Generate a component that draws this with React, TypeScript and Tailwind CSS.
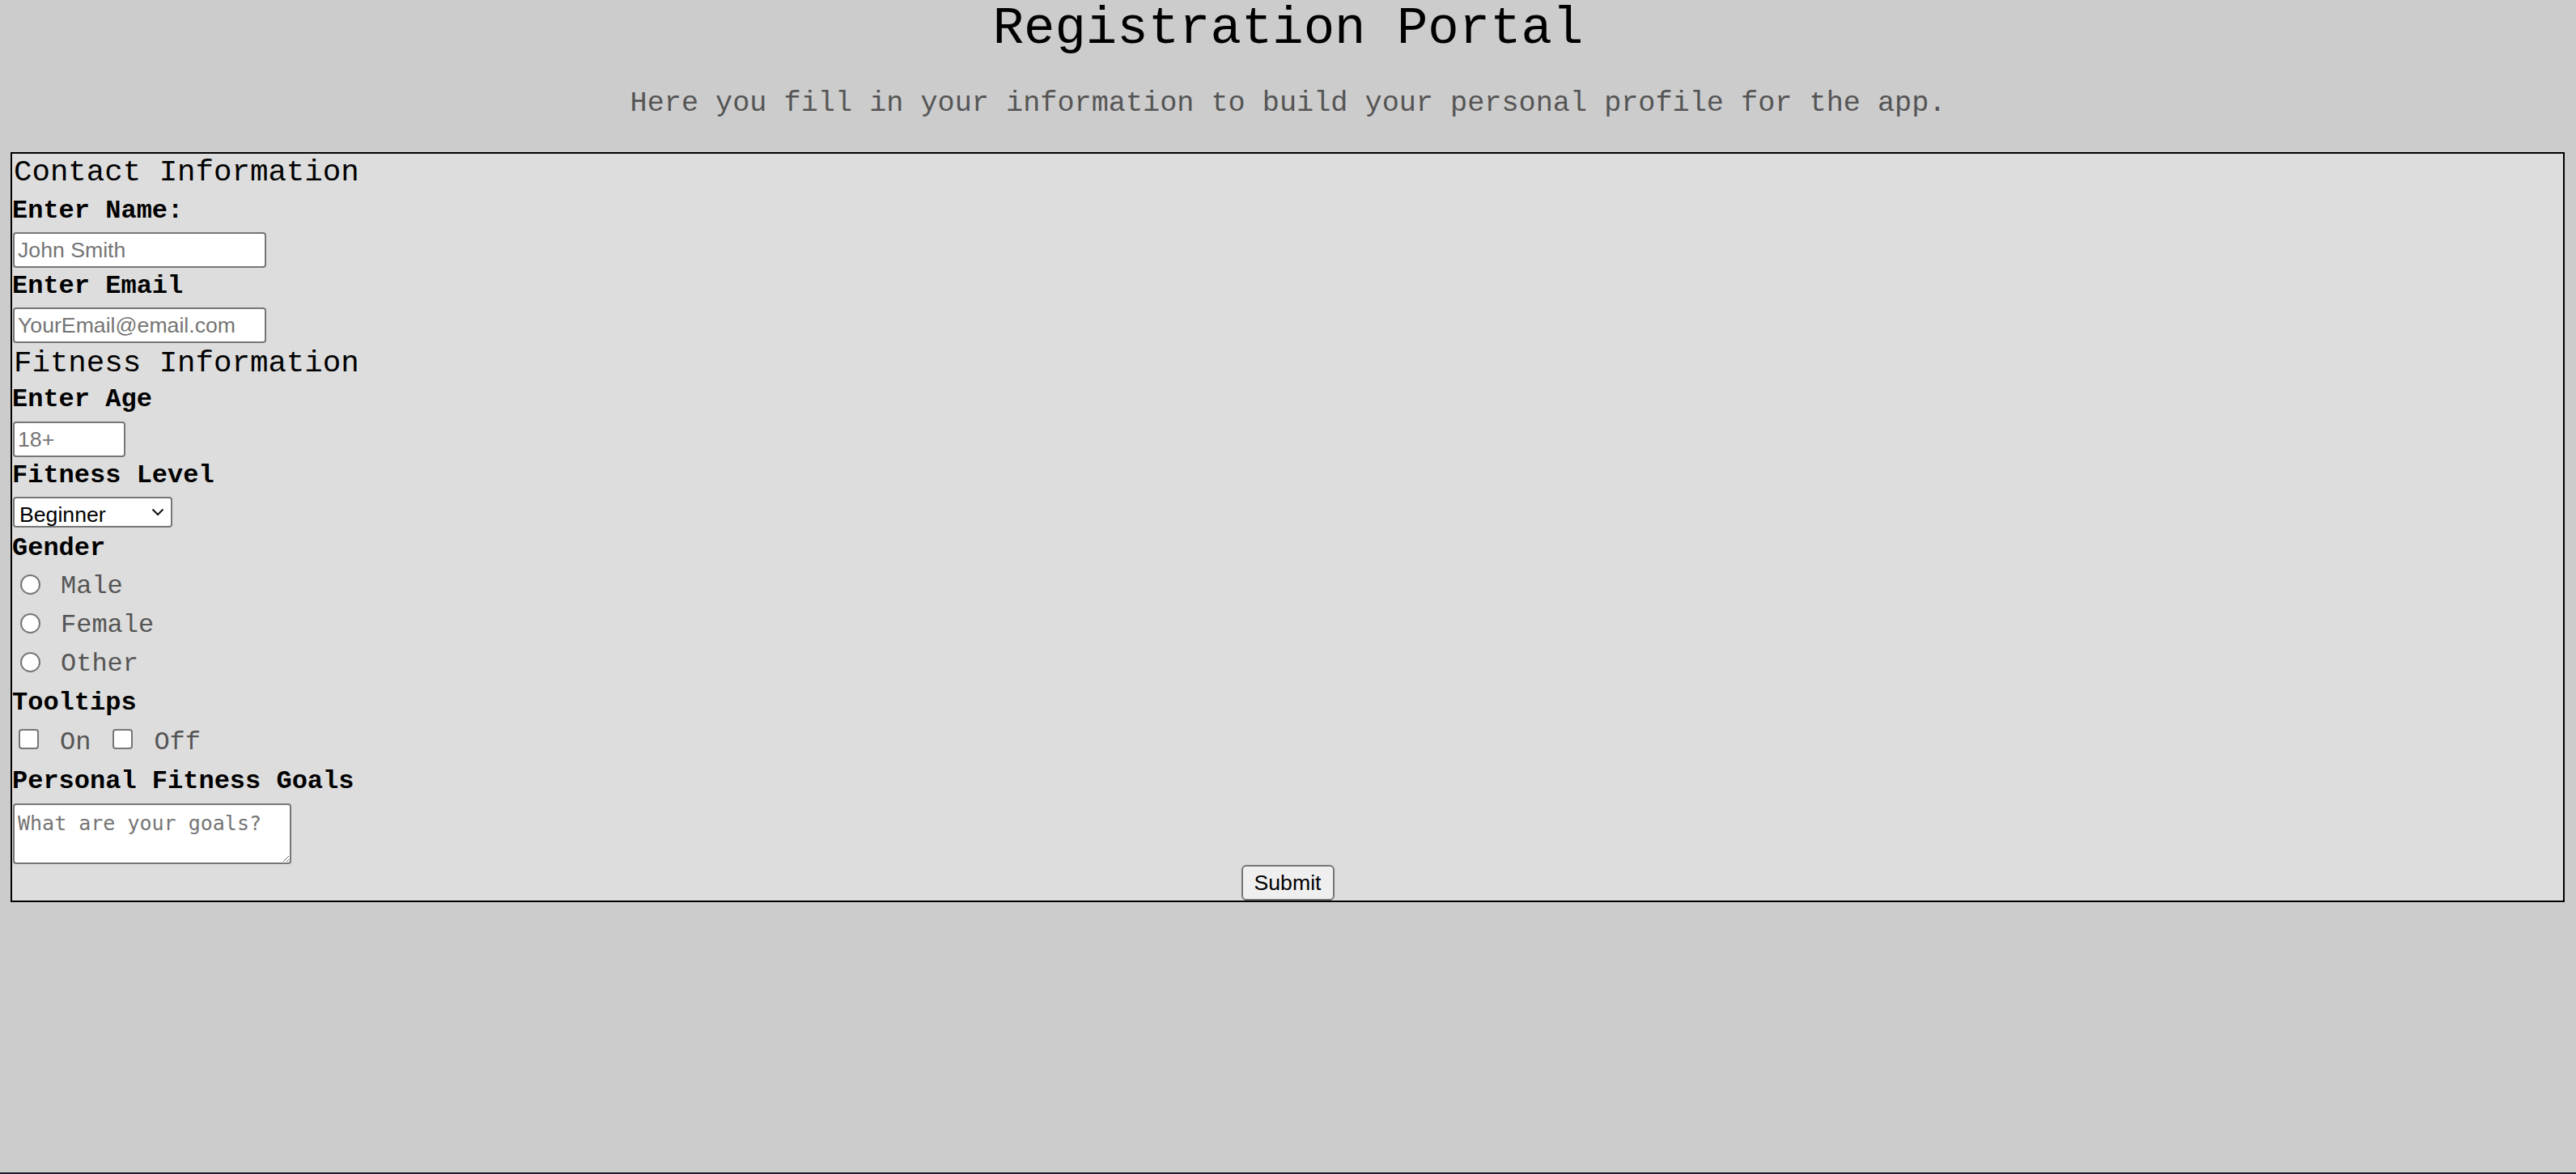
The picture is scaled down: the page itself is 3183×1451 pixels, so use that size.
export default function App() {
  const label = "text-[32px] font-bold leading-[36px] text-black";
  const input =
    "ml-[1px] h-[44px] rounded-[4px] border-2 border-[#767676] bg-white px-[4px] font-['Liberation_Sans',Arial,sans-serif] text-[26.67px] text-black outline-none placeholder:text-[#757575]";
  const radio = "ml-[10px] mt-[11px] h-[25px] w-[25px] shrink-0 appearance-none rounded-full border-2 border-[#767676] bg-white";
  const box = "h-[25px] w-[25px] shrink-0 appearance-none rounded-[4px] border-2 border-[#767676] bg-white";
  const soft = "text-[32px] leading-[36px] text-[#555555]";

  return (
    <div className="flex min-h-[1451px] flex-col bg-[#cccccc] font-['Liberation_Mono','Courier_New',monospace] text-black">
      <div className="flex-1">
        <h1 className="m-0 text-center text-[64px] font-normal leading-[72px]">Registration Portal</h1>
        <p className="mt-[36px] text-center text-[35.2px] leading-[40px] text-[#555555]">
          Here you fill in your information to build your personal profile for the app.
        </p>
        <form
          className="ml-[13px] mr-[14px] mt-[40px] flex flex-col items-start border-2 border-black bg-[#dddddd]"
          onSubmit={(e) => e.preventDefault()}
        >
          <h3 className="pl-[2px] pt-[2px] text-[37.44px] font-normal leading-[42px]">Contact Information</h3>
          <label className={`mt-[9px] ${label}`}>Enter Name:</label>
          <input type="text" placeholder="John Smith" className={`mt-[8px] w-[313px] ${input}`} />
          <label className={`mt-[5px] ${label}`}>Enter Email</label>
          <input type="text" placeholder="YourEmail@email.com" className={`mt-[8px] w-[313px] ${input}`} />

          <h3 className="mt-[2px] pl-[2px] pt-[2px] text-[37.44px] font-normal leading-[42px]">Fitness Information</h3>
          <label className={`mt-[6px] ${label}`}>Enter Age</label>
          <input type="text" placeholder="18+" className={`mt-[9px] w-[139px] ${input}`} />
          <label className={`mt-[5px] ${label}`}>Fitness Level</label>
          <div className="relative ml-[1px] mt-[8px]">
            <select
              defaultValue="Beginner"
              className="h-[38px] w-[197px] appearance-none rounded-[4px] border-2 border-[#767676] bg-white pl-[6px] font-['Liberation_Sans',Arial,sans-serif] text-[26.67px] text-black outline-none"
            >
              <option>Beginner</option>
              <option>Intermediate</option>
              <option>Advanced</option>
            </select>
            <svg
              className="pointer-events-none absolute right-[10px] top-[14px]"
              width="16"
              height="10"
              viewBox="0 0 16 10"
              fill="none"
            >
              <polyline points="1.5,1.5 8,8 14.5,1.5" stroke="#111" strokeWidth="2" />
            </svg>
          </div>
          <label className={`mt-[7px] ${label}`}>Gender</label>
          <div className="mt-[3px] flex flex-col">
            {["Male", "Female", "Other"].map((g) => (
              <div key={g} className="flex h-[48px] items-start">
                <input type="radio" name="gender" className={radio} />
                <span className={`ml-[25px] mt-[8px] ${soft}`}>{g}</span>
              </div>
            ))}
          </div>
          <label className={`mt-[8px] ${label}`}>Tooltips</label>
          <div className="mt-[12px] flex items-start">
            <input type="checkbox" className={`ml-[8px] mt-[2px] ${box}`} />
            <span className={`ml-[26px] mt-[0.5px] ${soft}`}>On</span>
            <input type="checkbox" className={`ml-[27px] mt-[2px] ${box}`} />
            <span className={`ml-[26px] mt-[0.5px] ${soft}`}>Off</span>
          </div>
          <label className={`mt-[12px] ${label}`}>Personal Fitness Goals</label>
          <textarea
            placeholder="What are your goals?"
            className="ml-[1px] mt-[9px] h-[75px] w-[344px] rounded-[4px] border-2 border-[#767676] bg-white p-[4px] font-['DejaVu_Sans_Mono',monospace] text-[25px] text-black outline-none placeholder:text-[#757575]"
          />
          <button
            type="submit"
            className="mt-[1px] h-[44px] w-[115px] self-center rounded-[6px] border-2 border-[#767676] bg-[#efefef] font-['Liberation_Sans',Arial,sans-serif] text-[26.67px] text-black"
          >
            Submit
          </button>
        </form>
      </div>
      <div className="h-[2px] bg-[#1c1c2e]" />
    </div>
  );
}
